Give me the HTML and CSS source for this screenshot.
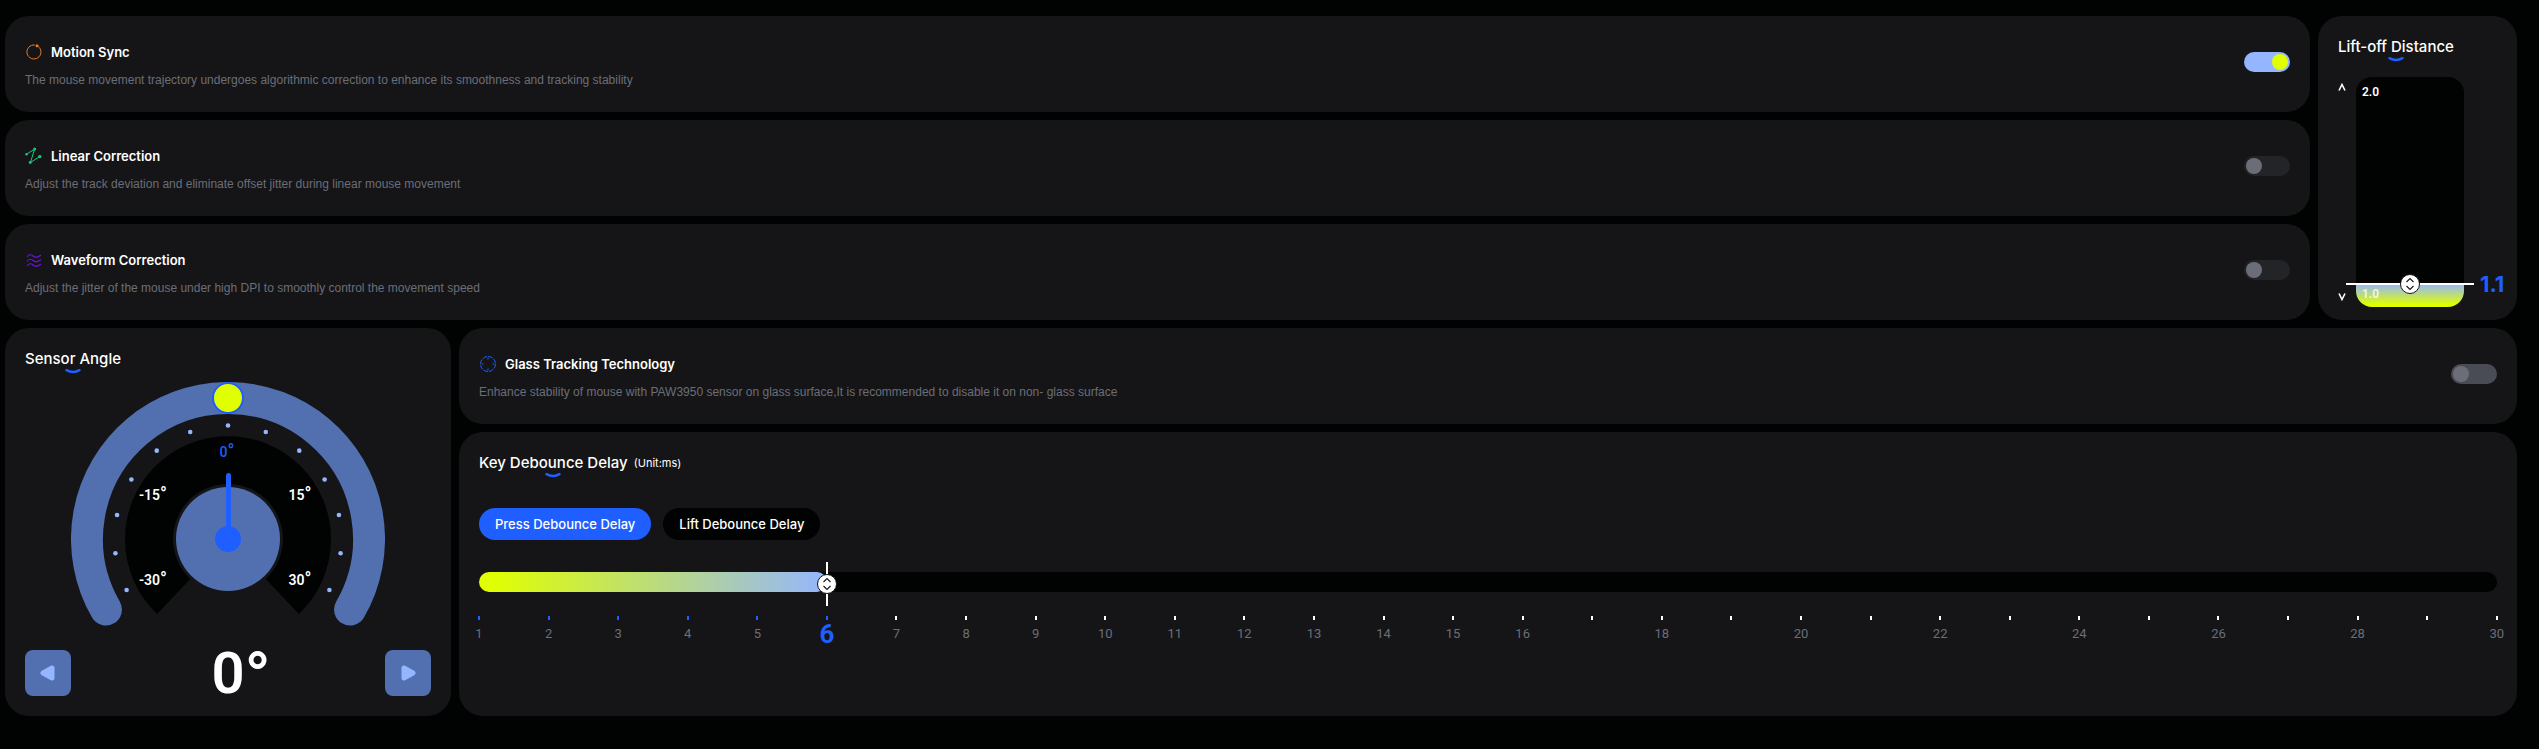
FILE: index.html
```html
<!DOCTYPE html>
<html lang="en">
<head>
<meta charset="utf-8">
<title>Sensor settings</title>
<link rel="stylesheet" href="styles.css">
</head>
<body>
<main class="page">
  <div class="row-top">
    <div class="stack">
      <section class="card option">
        <div class="option-text">
          <label class="option-title" for="motion">
            <svg class="icon" viewBox="0 0 18 18" fill="none" stroke="#e87a2a"><path d="M13.200 3.400A7 7 0 1 1 9.800 2"/><circle cx="12" cy="2.800" r="1.500" fill="#e87a2a" stroke="none"/></svg>
            Motion Sync
          </label>
          <p class="desc">The mouse movement trajectory undergoes algorithmic correction to enhance its smoothness and tracking stability</p>
        </div>
        <input class="toggle" type="checkbox" id="motion" checked>
      </section>
      <section class="card option">
        <div class="option-text">
          <label class="option-title" for="linear">
            <svg class="icon" viewBox="0 0 18 18" fill="none" stroke="#0ccf7d"><path d="M1.500 7.200 9.500 2.200 5.500 15.500 14.600 9.600" stroke-linejoin="round"/><g fill="#0ccf7d" stroke="none"><circle cx="1.500" cy="7.200" r="1.200"/><circle cx="9.600" cy="2" r="1.500"/><circle cx="5.200" cy="15.500" r="1.400"/><circle cx="14.800" cy="9.600" r="1.700"/></g></svg>
            Linear Correction
          </label>
          <p class="desc">Adjust the track deviation and eliminate offset jitter during linear mouse movement</p>
        </div>
        <input class="toggle" type="checkbox" id="linear">
      </section>
      <section class="card option">
        <div class="option-text">
          <label class="option-title" for="wave">
            <svg class="icon" viewBox="0 0 18 18" fill="none" stroke="#6c12dc" stroke-width="1.200"><path d="M2 6C4 3.200 6 3.200 8 5S12.500 7 16 4M2 10.500C4 7.700 6 7.700 8 9.500S12.500 11.500 16 8.500M2 15C4 12.200 6 12.200 8 14S12.500 16 16 13"/></svg>
            Waveform Correction
          </label>
          <p class="desc">Adjust the jitter of the mouse under high DPI to smoothly control the movement speed</p>
        </div>
        <input class="toggle" type="checkbox" id="wave">
      </section>
    </div>

    <section class="card lift">
      <h2 class="heading">Lift-off Distance<svg class="smile" viewBox="0 0 16 5"><path d="M1.500 1.200Q8 5 14.500 1.200"/></svg></h2>
      <div class="lift-body">
        <div class="steps">
          <button class="step" type="button" aria-label="Increase"><svg viewBox="0 0 8 8"><path d="M1 7.500 4 1.500 7 7.500"/></svg></button>
          <button class="step" type="button" aria-label="Decrease"><svg viewBox="0 0 8 8"><path d="M1 .5 4 6.500 7 .5"/></svg></button>
        </div>
        <div class="well">
          <div class="well-fill"></div>
          <span class="well-max">2.0</span>
          <span class="well-min">1.0</span>
          <div class="marker-h">
            <svg class="thumb" viewBox="0 0 20 20"><circle cx="10" cy="10" r="9.500"/><path d="M6.500 8 10 4.500 13.500 8M6.500 12 10 15.500 13.500 12"/></svg>
            <output class="lift-value">1.1</output>
          </div>
          <input class="range" type="range" min="1" max="2" step="0.1" value="1.1" aria-label="Lift-off Distance">
        </div>
      </div>
    </section>
  </div>

  <div class="row-bottom">
    <section class="card angle">
      <h2 class="heading">Sensor Angle<svg class="smile" viewBox="0 0 16 5"><path d="M1.500 1.200Q8 5 14.500 1.200"/></svg></h2>
      <svg class="gauge" viewBox="0 0 314 244">
        <path d="M34.900 227.500A141 141 0 1 1 279.100 227.500" fill="none" stroke="#5270b0" stroke-width="32" stroke-linecap="round"/>
        <path d="M86.100 232A103 103 0 1 1 227.900 232L194.800 197A55 55 0 1 0 119.200 197Z" fill="#010202"/>
        <circle cx="157" cy="157" r="52" fill="#5270b0"/>
        <g id="dots" fill="#94b6ff"></g>
        <path d="M157.500 157V93.500" stroke="#1f5eff" stroke-width="5" stroke-linecap="round"/>
        <circle cx="157" cy="157" r="13" fill="#1f5eff"/>
        <circle cx="157" cy="16" r="15" fill="#e0ff00" stroke="#1f5eff" stroke-width="2"/>
        <g class="gauge-text">
          <text class="now" x="156" y="75">0<tspan class="ring">°</tspan></text>
          <text x="82" y="118">-15<tspan class="ring">°</tspan></text>
          <text x="229" y="118">15<tspan class="ring">°</tspan></text>
          <text x="82" y="203">-30<tspan class="ring">°</tspan></text>
          <text x="229" y="203">30<tspan class="ring">°</tspan></text>
        </g>
      </svg>
      <div class="angle-foot">
        <button class="nudge" type="button" aria-label="Rotate left"><svg viewBox="0 0 16 16"><path d="M12 3V13L3 8Z"/></svg></button>
        <output class="angle-value">0<span class="degree">°</span></output>
        <button class="nudge" type="button" aria-label="Rotate right"><svg viewBox="0 0 16 16"><path d="M4 3V13L13 8Z"/></svg></button>
      </div>
    </section>

    <div class="stack">
      <section class="card option">
        <div class="option-text">
          <label class="option-title" for="glass">
            <svg class="icon" viewBox="0 0 18 18" fill="none" stroke="#1f5eff"><circle cx="9" cy="9" r="7.500" stroke-dasharray="4.700 1.190"/><path d="M9 2.500v2M9 13.500v2M2.500 9h2M13.500 9h2"/></svg>
            Glass Tracking Technology
          </label>
          <p class="desc">Enhance stability of mouse with PAW3950 sensor on glass surface,It is recommended to disable it on non- glass surface</p>
        </div>
        <input class="toggle toggle-light" type="checkbox" id="glass">
      </section>
      <section class="card debounce">
        <div class="debounce-head">
          <h2 class="heading">Key Debounce Delay<svg class="smile" viewBox="0 0 16 5"><path d="M1.500 1.200Q8 5 14.500 1.200"/></svg></h2>
          <span class="unit">(Unit:ms)</span>
        </div>
        <div class="tabs">
          <button class="tab active" type="button">Press Debounce Delay</button>
          <button class="tab" type="button">Lift Debounce Delay</button>
        </div>
        <div class="track">
          <div class="track-fill" style="width:17.24%"></div>
          <div class="marker-v" style="left:17.24%"><svg class="thumb" viewBox="0 0 20 20"><circle cx="10" cy="10" r="9.500"/><path d="M6.500 8 10 4.500 13.500 8M6.500 12 10 15.500 13.500 12"/></svg></div>
          <input class="range" type="range" min="1" max="30" value="6" aria-label="Press Debounce Delay">
        </div>
        <ol class="scale" id="scale"></ol>
      </section>
    </div>
  </div>
</main>
<script src="app.js"></script>
</body>
</html>
```
FILE: styles.css
```css
* { box-sizing: border-box; }

body {
  margin: 0;
  background: #010202;
  color: #fff;
  font-family: Inter, "Liberation Sans", sans-serif;
}

.page {
  display: flex;
  flex-direction: column;
  gap: 8px;
  padding: 16px 22px 32px 5px;
}

.row-top, .row-bottom { display: flex; gap: 8px; }

.stack {
  flex: 1;
  min-width: 0;
  display: flex;
  flex-direction: column;
  gap: 8px;
}

.card { background: #151517; border-radius: 24px; }

.option {
  display: flex;
  justify-content: space-between;
  align-items: flex-start;
  padding: 24px 20px;
}

.option-title {
  display: flex;
  align-items: center;
  gap: 8px;
  font-size: 13px;
  font-weight: 600;
  line-height: 24px;
}

.icon { width: 18px; height: 18px; }

.desc {
  margin: 8px 0 0;
  color: #6b6e78;
  font: 12px/16px "Liberation Sans", Arial, sans-serif;
}

.toggle {
  appearance: none;
  display: flex;
  width: 46px;
  height: 20px;
  margin: 12px 0 0;
  padding: 2px;
  border-radius: 10px;
  background: #232428;
}
.toggle::before {
  content: "";
  width: 16px;
  height: 16px;
  border-radius: 50%;
  background: #6b6e78;
}
.toggle-light { background: #4a4c55; }
.toggle:checked { background: #94b6ff; justify-content: flex-end; }
.toggle:checked::before { background: #e0ff00; }

.heading {
  position: relative;
  align-self: flex-start;
  margin: 0;
  font-size: 15px;
  font-weight: 500;
  line-height: 26px;
}
.smile {
  position: absolute;
  left: 50%;
  bottom: -2px;
  width: 16px;
  height: 5px;
  margin-left: -8px;
  overflow: visible;
  fill: none;
  stroke: #1f5eff;
  stroke-width: 2.5;
  stroke-linecap: round;
}

.lift {
  display: flex;
  flex-direction: column;
  width: 199px;
  padding: 18px 20px 13px;
}
.lift-body {
  display: flex;
  flex: 1;
  margin-top: 17px;
}
.steps {
  display: flex;
  flex-direction: column;
  justify-content: space-between;
  width: 18px;
  padding: 6px 0;
}
.step {
  display: flex;
  width: 8px;
  padding: 0;
  border: 0;
  background: none;
}
.step svg {
  width: 8px;
  height: 8px;
  fill: none;
  stroke: #fff;
  stroke-width: 1.6;
}
.well {
  position: relative;
  display: flex;
  flex-direction: column;
  justify-content: space-between;
  width: 108px;
  padding: 7px 6px 5px;
  border-radius: 16px;
  background: #010202;
  font: 600 12px/16px Roboto, sans-serif;
}
.well-fill {
  position: absolute;
  inset: auto 0 0;
  height: 10%;
  border-radius: 0 0 16px 16px;
  background: linear-gradient(#94b6ff, #e0ff00 90%);
}
.well-max, .well-min { position: relative; }
.well-min { opacity: 0.8; }
.marker-h {
  position: absolute;
  left: -10px;
  right: -10px;
  bottom: 22px;
  height: 2px;
  display: flex;
  align-items: center;
  justify-content: center;
  background: #fff;
}
.thumb {
  flex: none;
  width: 20px;
  height: 20px;
}
.thumb circle { fill: #fff; stroke: #151517; }
.thumb path { fill: none; stroke: #151517; stroke-width: 1.1; }
.lift-value {
  position: absolute;
  left: 100%;
  margin-left: 6px;
  color: #1f5eff;
  font: 700 22px/24px Inter, sans-serif;
}
.range {
  position: absolute;
  inset: 0;
  width: 100%;
  height: 100%;
  margin: 0;
  opacity: 0;
}

.angle {
  display: flex;
  flex-direction: column;
  width: 446px;
  padding: 18px 20px 20px;
}
.gauge {
  align-self: center;
  width: 314px;
  height: 244px;
  margin: 10px 0 24px;
}
.gauge-text {
  fill: #fff;
  font: 600 14px Roboto, sans-serif;
  text-anchor: middle;
}
.now { fill: #1f5eff; font-weight: 500; }
.ring { font-size: 18px; }
.angle-foot {
  display: flex;
  align-items: center;
  justify-content: space-between;
}
.nudge {
  display: flex;
  align-items: center;
  justify-content: center;
  width: 46px;
  height: 46px;
  padding: 0;
  border: 0;
  border-radius: 8px;
  background: #5270b0;
}
.nudge svg {
  width: 16px;
  height: 16px;
  fill: #94b6ff;
  stroke: #94b6ff;
  stroke-width: 5;
  stroke-linejoin: round;
}
.angle-value {
  position: relative;
  font: 600 58px/46px Roboto, sans-serif;
}
.degree {
  position: absolute;
  left: 100%;
  font-size: 68px;
  line-height: 54px;
}

.debounce {
  display: flex;
  flex-direction: column;
  flex: 1;
  padding: 18px 20px;
}
.debounce-head { display: flex; gap: 6px; }
.unit { font-size: 11px; line-height: 26px; }
.tabs { display: flex; gap: 12px; margin: 32px 0; }
.tab {
  padding: 0 16px;
  border: 0;
  border-radius: 16px;
  background: #010202;
  color: #fff;
  font: 500 13px/32px Inter, sans-serif;
}
.tab.active { background: #1f5eff; }
.track {
  position: relative;
  height: 20px;
  border-radius: 10px;
  background: #010202;
}
.track-fill {
  height: 20px;
  border-radius: 10px;
  background: linear-gradient(90deg, #e0ff00 3%, #94b6ff);
}
.marker-v {
  position: absolute;
  top: -10px;
  display: flex;
  align-items: center;
  justify-content: center;
  width: 2px;
  height: 44px;
  margin-left: -1px;
  background: #fff;
}
.scale {
  display: flex;
  justify-content: space-between;
  margin: 24px 0 0;
  padding: 0;
  list-style: none;
  color: #6b6e78;
  font: 13px/28px Roboto, sans-serif;
}
.scale li {
  display: flex;
  flex-direction: column;
  align-items: center;
  width: 0;
}
.scale li::before {
  content: "";
  width: 2px;
  height: 4px;
  background: #fff;
}
.scale .passed::before { background: #1f5eff; }
.scale .current {
  color: #1f5eff;
  font-size: 26px;
  font-weight: 700;
}
```
FILE: app.js
```js
const value = 6;
const scale = document.getElementById('scale');
for (let n = 1; n <= 30; n++) {
  const item = document.createElement('li');
  if (n <= value) item.classList.add('passed');
  if (n === value) item.classList.add('current');
  if (n <= 16 || n % 2 === 0) item.textContent = n;
  scale.append(item);
}

const dots = document.getElementById('dots');
for (let i = -6; i <= 6; i++) {
  const a = i * 19.45 * Math.PI / 180;
  const dot = document.createElementNS('http://www.w3.org/2000/svg', 'circle');
  dot.setAttribute('cx', 157 + 113.5 * Math.sin(a));
  dot.setAttribute('cy', 157 - 113.5 * Math.cos(a));
  dot.setAttribute('r', 2.3);
  dots.append(dot);
}
```
